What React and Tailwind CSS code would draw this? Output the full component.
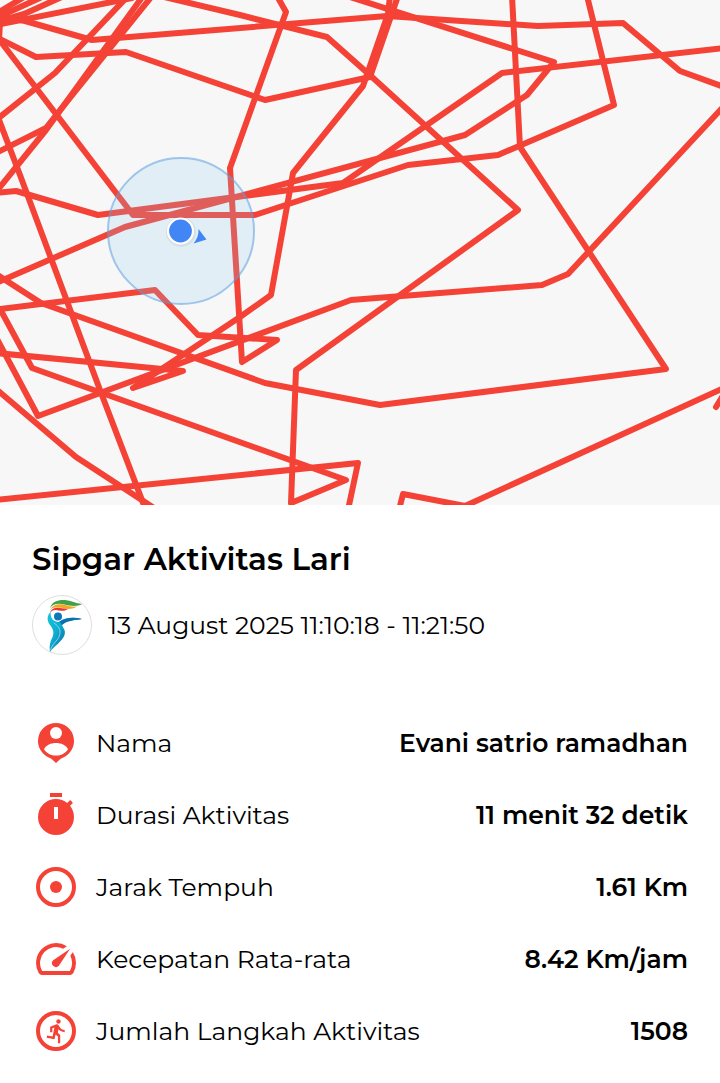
const TRACKS = [
  "M-4 16 L25 21 L92 40 L387 16 L538 26 L623 23 L680 71 L724 87",
  "M-4 25 L132 -2",
  "M-4 14 L24 -3",
  "M-4 18 L42 -3",
  "M-4 22 L24 14 L64 -4",
  "M-4 20 L14 18",
  "M0 22 L-1 40",
  "M-4 37 L36 57 L126 52 L265 100 L370 77 L398 -4",
  "M390 -4 L388 14 L363 86 L293 173 L271 295 L240 317 L133 388 L183 371 L-4 353",
  "M-2 38 L56 114 L133 215 L255 215 L408 165 L498 155 L614 105 L587 -4",
  "M-4 120 L55 73 L128 -4",
  "M-4 153 L46 128 L57 114 L152 -4",
  "M-4 192 L46 130 L143 -4",
  "M-4 112 L20 175 L100 390 L145 508",
  "M-4 193 L16 191 L98 215 L343 183 L502 73 L724 48",
  "M-4 283 L125 227 L465 135 L527 95 L554 62 L350 -3",
  "M160 -4 L240 15 L327 37 L372 77 L518 210 L296 370 L291 503 L346 480 L32 368 L0 309 L155 290 L198 335 L277 340 L242 362 L230 168 L286 12 L277 -4",
  "M-4 274 L41 303 L265 383 L380 405 L666 369 L520 147 L512 -4",
  "M-4 337 L38 416 L351 300 L542 285 L568 274 L724 106",
  "M-4 389 L76 457 L154 508",
  "M-4 500 L358 463 L348 510",
  "M399 510 L403 494 L465 506 L724 388",
  "M716 407 L724 394",
];

function RouteMap() {
  return (
    <svg viewBox="0 0 720 505" className="block h-auto w-full bg-[#f7f7f7]" role="img" aria-label="Rute lari">
      <g fill="none" stroke="#f44336" strokeWidth="6" strokeLinecap="round" strokeLinejoin="round">
        {TRACKS.map((d) => (
          <path key={d} d={d} />
        ))}
      </g>
      <circle cx="181" cy="231" r="73" fill="#8accf6" fillOpacity="0.2" stroke="#5b9fdf" strokeOpacity="0.55" strokeWidth="2" />
      <circle cx="181" cy="232" r="15" fill="#000" fillOpacity="0.06" />
      <path d="M198.500 229 L206.500 239.500 L193.500 243.500 Q199 237 198.500 229 Z" fill="#4285f4" />
      <circle cx="180.500" cy="231" r="12.500" fill="#4285f4" stroke="#fff" strokeWidth="2.200" />
    </svg>
  );
}

function Logo() {
  return (
    <svg viewBox="0 0 60 60" className="size-[60px] shrink-0" role="img" aria-label="Sipgar">
      <defs>
        <linearGradient id="body" x1="0" y1="0" x2="1" y2="0.600">
          <stop offset="0" stopColor="#14c6dd" />
          <stop offset="0.4" stopColor="#0eaed0" />
          <stop offset="0.8" stopColor="#0b64a8" />
        </linearGradient>
      </defs>
      <circle cx="30" cy="30" r="29.500" fill="#fff" stroke="#dedede" />
      <path d="M18 13 C20 6 27 4.500 33 5 C39 5.500 44 8.500 50 9 C45 12 38 11 32 9.500 C26 8 21 9 18 13 Z" fill="#43a047" />
      <path d="M18 15.500 C20 10 26 8.500 31 9.500 C36 11 40 12 45 11.500 C39 15 34 14 29 12.800 C24 11.500 20 12.500 18 15.500 Z" fill="#f5a623" />
      <path d="M18 18 C19 13.500 24 12 28 13 L36 14 C32 17 27 15.500 24 15 C21 14.800 19.500 16 18 18 Z" fill="#e53935" />
      <circle cx="26" cy="21.500" r="4" fill="#0b78b8" />
      <path d="M18.500 17 C14.500 21 15 26 18 30 C21 34 22.500 37 20.500 42 C18 47 17 51 18 57 C22 51 30 47 32.500 40 C34 35 31 33 30 30 C33 26 42 25 50 24 C42 22 33 22 27 27 C21 27 18.500 23 18.500 17 Z" fill="url(#body)" />
      <path d="M27 27 C34 22 42 22 50 24 C42 25 34 26 30 30 C29.500 29 28.500 27.500 27 27 Z" fill="#0b70b0" />
      <path d="M18.500 55 C21 47 28 45 28 37 C28 33 25 30 22 28" fill="none" stroke="#fff" strokeOpacity="0.7" strokeWidth="0.700" />
    </svg>
  );
}

function Icon({ children }) {
  return (
    <svg viewBox="0 0 24 24" className="size-12 shrink-0 fill-[#f44336]" aria-hidden="true">
      {children}
    </svg>
  );
}

const STATS = [
  {
    label: "Nama",
    value: "Evani satrio ramadhan",
    icon: (
      <>
        <path d="M12 2a9 9 0 0 0-3.400 17.330c.6.250 1.100.470 1.500.870L12 22l1.900-1.800c.4-.4.900-.620 1.500-.870A9 9 0 0 0 12 2z" />
        <circle cx="12" cy="7" r="3" fill="#fff" />
        <path d="M6 15.100C7 13 9.500 12 12 12s5 1 6 3.100C16.700 17.200 14.500 18.300 12 18.300S7.300 17.200 6 15.100z" fill="#fff" />
      </>
    ),
  },
  {
    label: "Durasi Aktivitas",
    value: "11 menit 32 detik",
    icon: (
      <path d="M9 1h6v2H9zM19.030 7.390l1.420-1.420c-.43-.51-.9-.99-1.410-1.410l-1.420 1.420A8.960 8.960 0 0 0 12 4a9 9 0 1 0 9 9c0-2.120-.74-4.070-1.970-5.610zM13 14h-2V8h2v6z" />
    ),
  },
  {
    label: "Jarak Tempuh",
    value: "1.61 Km",
    icon: (
      <>
        <circle cx="12" cy="12" r="9" fill="none" stroke="#f44336" strokeWidth="2" />
        <circle cx="12" cy="12" r="3" />
      </>
    ),
  },
  {
    label: "Kecepatan Rata-rata",
    value: "8.42 Km/jam",
    icon: (
      <path d="M20.380 8.570l-1.230 1.850a8 8 0 0 1-.22 7.580H5.070A8 8 0 0 1 15.580 6.850l1.850-1.230A10 10 0 0 0 3.350 19a2 2 0 0 0 1.720 1h13.850a2 2 0 0 0 1.740-1 10 10 0 0 0-.27-10.440zm-9.790 6.840a2 2 0 0 0 2.830 0l5.660-8.490-8.490 5.660a2 2 0 0 0 0 2.830z" />
    ),
  },
  {
    label: "Jumlah Langkah Aktivitas",
    value: "1508",
    icon: (
      <>
        <circle cx="12" cy="12" r="9" fill="none" stroke="#f44336" strokeWidth="2" />
        <path
          transform="translate(5.700 5.300) scale(0.560)"
          d="M13.490 5.480c1.100 0 2-.9 2-2s-.9-2-2-2-2 .9-2 2 .9 2 2 2zm-3.600 13.900l1-4.400 2.100 2v6h2v-7.500l-2.100-2 .6-3c1.300 1.500 3.300 2.500 5.500 2.500v-2c-1.900 0-3.500-1-4.300-2.400l-1-1.600c-.4-.6-1-1-1.700-1-.3 0-.5.1-.8.1l-5.200 2.200v4.700h2v-3.400l1.800-.7-1.600 8.100-4.900-1-.4 2 7 1.400z"
        />
      </>
    ),
  },
];

export default function App() {
  return (
    <main className="min-h-screen bg-white font-[Montserrat,Inter,sans-serif] text-black">
      <RouteMap />
      <section className="px-8 pt-8 pb-4">
        <h1 className="text-[31px] leading-[44px] font-semibold">Sipgar Aktivitas Lari</h1>
        <div className="mt-3.5 flex items-center gap-4">
          <Logo />
          <p className="text-[25px] leading-8 font-normal">13 August 2025 11:10:18 - 11:21:50</p>
        </div>
        <dl className="mt-[52px]">
          {STATS.map(({ label, value, icon }) => (
            <div key={label} className="flex h-[72px] items-center justify-between gap-4">
              <dt className="flex items-center gap-4 text-[25px] leading-8 font-normal">
                <Icon>{icon}</Icon>
                {label}
              </dt>
              <dd className="text-right text-[25px] leading-8 font-semibold">{value}</dd>
            </div>
          ))}
        </dl>
      </section>
    </main>
  );
}
